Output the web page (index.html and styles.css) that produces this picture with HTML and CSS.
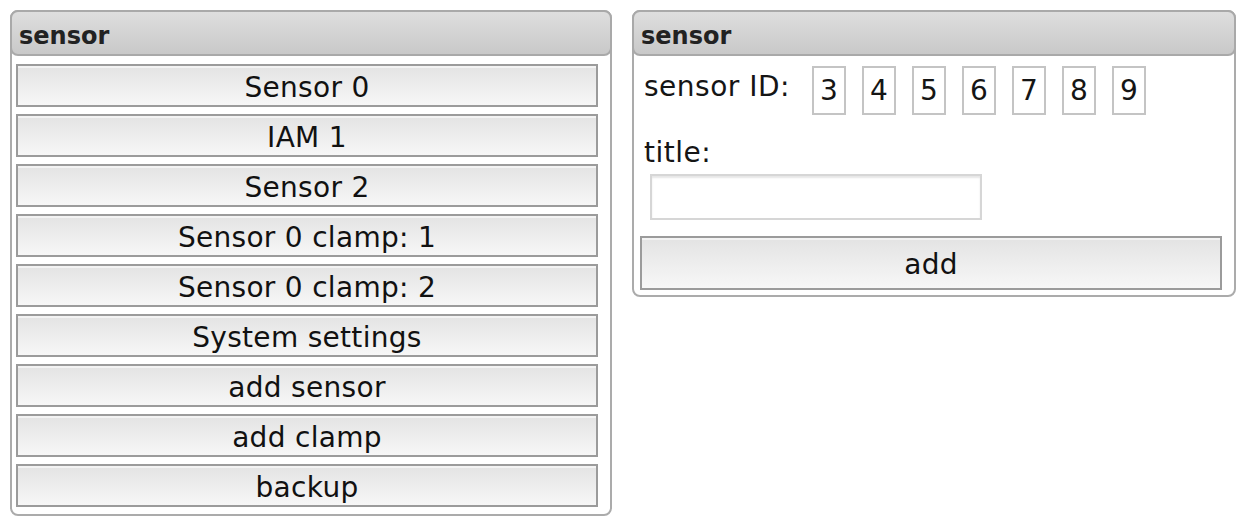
FILE: index.html
```html
<!DOCTYPE html>
<html>
<head>
<meta charset="utf-8">
<link rel="stylesheet" href="styles.css">
</head>
<body>
<div class="page">
  <div class="panel panel-left">
    <div class="panel-header">sensor</div>
    <div class="menu">
      <div class="btn">Sensor 0</div>
      <div class="btn">IAM 1</div>
      <div class="btn">Sensor 2</div>
      <div class="btn">Sensor 0 clamp: 1</div>
      <div class="btn">Sensor 0 clamp: 2</div>
      <div class="btn">System settings</div>
      <div class="btn">add sensor</div>
      <div class="btn">add clamp</div>
      <div class="btn">backup</div>
    </div>
  </div>
  <div class="panel panel-right">
    <div class="panel-header">sensor</div>
    <div class="form">
      <div class="id-row">
        <div class="label id-label">sensor ID:</div>
        <div class="ids">
          <div class="id">3</div>
          <div class="id">4</div>
          <div class="id">5</div>
          <div class="id">6</div>
          <div class="id">7</div>
          <div class="id">8</div>
          <div class="id">9</div>
        </div>
      </div>
      <div class="label title-label">title:</div>
      <input class="title-input" type="text">
      <div class="btn btn-add">add</div>
    </div>
  </div>
</div>
</body>
</html>
```

FILE: styles.css
```css
html, body {
  margin: 0;
  padding: 0;
  background: #ffffff;
}

body {
  font-family: "DejaVu Sans", Verdana, sans-serif;
  color: #151515;
}

.page {
  display: flex;
  align-items: flex-start;
  gap: 20px;
  padding: 10px 12px 0 10px;
}

.panel {
  border: 2px solid #ababab;
  border-radius: 8px;
  background: #ffffff;
}

.panel-left {
  width: 602px;
  box-sizing: border-box;
}

.panel-right {
  width: 604px;
  box-sizing: border-box;
}

.panel-header {
  margin: -2px -2px 0 -2px;
  padding: 10px 8px 4px 7px;
  height: 28px;
  line-height: 28px;
  font-size: 24px;
  font-weight: bold;
  color: #222222;
  border: 2px solid #a9a9a9;
  border-radius: 8px;
  background: linear-gradient(#dedede, #c9c9c9);
}

.menu {
  display: flex;
  flex-direction: column;
  gap: 7px;
  padding: 8px 12px 7px 4px;
}

.btn {
  height: 35px;
  padding-top: 4px;
  line-height: 35px;
  font-size: 28px;
  letter-spacing: 0.3px;
  text-align: center;
  color: #111111;
  border: 2px solid #9b9b9b;
  background: linear-gradient(#e3e3e3, #f7f7f7);
  box-shadow: inset 0 2px 0 #f3f3f3;
}

.form {
  display: flex;
  flex-direction: column;
  align-items: flex-start;
  padding: 10px 12px 5px 6px;
}

.id-row {
  display: flex;
  align-items: flex-start;
  padding-left: 4px;
}

.label {
  font-size: 28px;
  line-height: 33px;
  letter-spacing: 0.5px;
  color: #151515;
}

.id-label {
  width: 168px;
  margin-top: 4px;
  margin-bottom: -1px;
}

.ids {
  display: flex;
  gap: 16px;
}

.id {
  box-sizing: border-box;
  width: 34px;
  height: 49px;
  padding-top: 1px;
  line-height: 44px;
  font-size: 28px;
  text-align: center;
  border: 2px solid #c4c4c4;
  background: #ffffff;
}

.title-label {
  margin-top: 21px;
  margin-bottom: -1px;
  padding-left: 4px;
}

.title-input {
  box-sizing: border-box;
  width: 332px;
  height: 46px;
  margin: 6px 0 0 10px;
  padding: 0 6px;
  border: 2px solid #d6d6d6;
  box-shadow: inset 0 2px 2px #e6e6e6;
  background: #ffffff;
  font-family: "DejaVu Sans", Verdana, sans-serif;
  font-size: 24px;
  outline: none;
}

.btn-add {
  align-self: stretch;
  margin-top: 16px;
  height: 46px;
  line-height: 46px;
  padding-top: 4px;
}
```
